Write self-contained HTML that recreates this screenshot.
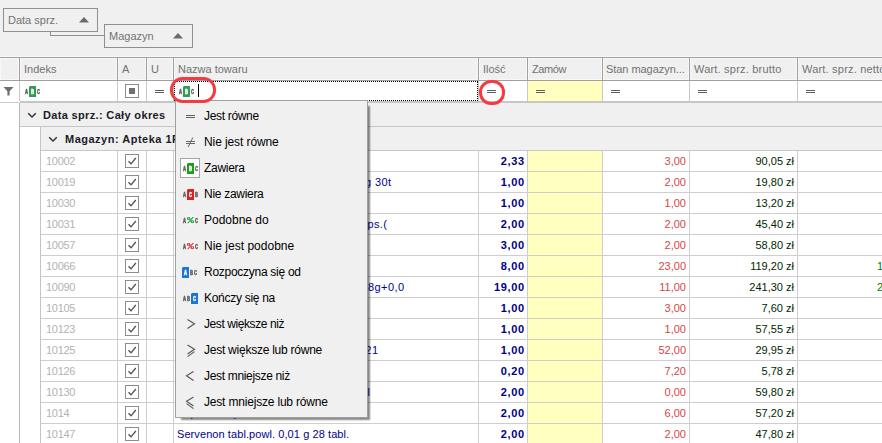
<!DOCTYPE html>
<html lang="pl"><head><meta charset="utf-8"><title>Filtr</title>
<style>
*{box-sizing:border-box;margin:0;padding:0}
html,body{width:882px;height:443px;overflow:hidden;background:#fff}
body{position:relative;font-family:"Liberation Sans","DejaVu Sans",sans-serif;font-size:11px;color:#000}
.a{position:absolute}
.t{position:absolute;white-space:nowrap;line-height:13px;height:13px}
.hd{color:#727272}
.gb{position:absolute;border:1px solid #8f8f8f;background:#f0f0f0}
.vl{position:absolute;width:1px;background:#cecece}
.hl{position:absolute;height:1px;background:#cecece}
.cb{position:absolute;width:14px;height:14px;border:1px solid #8c8c8c;background:#fff}
.eq{position:absolute;width:9px;height:3px;border-top:1px solid #5c5c68;border-bottom:1px solid #5c5c68}
.mi{position:absolute;left:204px;white-space:nowrap;font-size:12px;line-height:16px;height:16px;color:#000}
svg{position:absolute;overflow:visible}
.ic{will-change:opacity;opacity:.99}
svg text{font-family:"Liberation Mono",monospace;font-weight:bold;font-size:7.6px;stroke-width:0.5px}
</style></head>
<body>
<div class="a" style="left:0;top:0;width:882px;height:57px;background:#f0f0f0"></div>
<div class="a" style="left:50px;top:31px;width:55px;height:5px;border-left:1px solid #8f8f8f;border-bottom:1px solid #8f8f8f"></div>
<div class="gb" style="left:3px;top:8px;width:95px;height:24px"></div>
<div class="t hd" style="left:8px;top:14px">Data sprz.</div>
<svg style="left:78px;top:16px" width="12" height="7" viewBox="0 0 12 7"><polygon points="1,6.5 6,1 11,6.5" fill="#6a6a6a"/></svg>
<div class="gb" style="left:104px;top:24px;width:89px;height:24px"></div>
<div class="t hd" style="left:109px;top:30px">Magazyn</div>
<svg style="left:172px;top:32px" width="12" height="7" viewBox="0 0 12 7"><polygon points="1,6.5 6,1 11,6.5" fill="#6a6a6a"/></svg>
<div class="a" style="left:0;top:56px;width:882px;height:1px;background:#f8f8f8"></div>
<div class="a" style="left:0;top:57px;width:882px;height:24px;background:#f0f0f0;border-top:1px solid #a0a0a0;border-bottom:1px solid #a0a0a0"></div>
<div class="a" style="left:19px;top:58px;width:1px;height:22px;background:#a0a0a0"></div>
<div class="a" style="left:117px;top:58px;width:1px;height:22px;background:#a0a0a0"></div>
<div class="a" style="left:146px;top:58px;width:1px;height:22px;background:#a0a0a0"></div>
<div class="a" style="left:173px;top:58px;width:1px;height:22px;background:#a0a0a0"></div>
<div class="a" style="left:478px;top:58px;width:1px;height:22px;background:#a0a0a0"></div>
<div class="a" style="left:527px;top:58px;width:1px;height:22px;background:#a0a0a0"></div>
<div class="a" style="left:602px;top:58px;width:1px;height:22px;background:#a0a0a0"></div>
<div class="a" style="left:689px;top:58px;width:1px;height:22px;background:#a0a0a0"></div>
<div class="a" style="left:797px;top:58px;width:1px;height:22px;background:#a0a0a0"></div>
<div class="a" style="left:0px;top:58px;width:19px;height:22px;border:1px solid #f8f8f8"></div>
<div class="a" style="left:20px;top:58px;width:97px;height:22px;border:1px solid #f8f8f8"></div>
<div class="a" style="left:118px;top:58px;width:28px;height:22px;border:1px solid #f8f8f8"></div>
<div class="a" style="left:147px;top:58px;width:26px;height:22px;border:1px solid #f8f8f8"></div>
<div class="a" style="left:174px;top:58px;width:304px;height:22px;border:1px solid #f8f8f8"></div>
<div class="a" style="left:479px;top:58px;width:48px;height:22px;border:1px solid #f8f8f8"></div>
<div class="a" style="left:528px;top:58px;width:74px;height:22px;border:1px solid #f8f8f8"></div>
<div class="a" style="left:603px;top:58px;width:86px;height:22px;border:1px solid #f8f8f8"></div>
<div class="a" style="left:690px;top:58px;width:107px;height:22px;border:1px solid #f8f8f8"></div>
<div class="a" style="left:798px;top:58px;width:92px;height:22px;border:1px solid #f8f8f8"></div>
<div class="t hd" style="left:24px;top:63px">Indeks</div>
<div class="t hd" style="left:122px;top:63px">A</div>
<div class="t hd" style="left:151px;top:63px">U</div>
<div class="t hd" style="left:178px;top:63px">Nazwa towaru</div>
<div class="t hd" style="left:483px;top:63px">Ilość</div>
<div class="t hd" style="left:532px;top:63px;letter-spacing:-0.4px">Zamów</div>
<div class="t hd" style="left:606px;top:63px;letter-spacing:-0.05px">Stan magazyn...</div>
<div class="t hd" style="left:694px;top:63px;letter-spacing:0.2px">Wart. sprz. brutto</div>
<div class="t hd" style="left:802px;top:63px;letter-spacing:0.2px">Wart. sprz. netto</div>
<div class="a" style="left:528px;top:81px;width:74px;height:20px;background:#ffffc0"></div>
<div class="a" style="left:19px;top:81px;width:1px;height:20px;background:#c8c8c8"></div>
<div class="a" style="left:117px;top:81px;width:1px;height:20px;background:#c8c8c8"></div>
<div class="a" style="left:146px;top:81px;width:1px;height:20px;background:#c8c8c8"></div>
<div class="a" style="left:173px;top:81px;width:1px;height:20px;background:#c8c8c8"></div>
<div class="a" style="left:478px;top:81px;width:1px;height:20px;background:#c8c8c8"></div>
<div class="a" style="left:527px;top:81px;width:1px;height:20px;background:#c8c8c8"></div>
<div class="a" style="left:602px;top:81px;width:1px;height:20px;background:#c8c8c8"></div>
<div class="a" style="left:689px;top:81px;width:1px;height:20px;background:#c8c8c8"></div>
<div class="a" style="left:797px;top:81px;width:1px;height:20px;background:#c8c8c8"></div>
<div class="a" style="left:20px;top:101px;width:862px;height:2px;background:#c6c6c6"></div>
<div class="a" style="left:0;top:102px;width:19px;height:1px;background:#cacaca"></div>
<svg style="left:3px;top:86px" width="12" height="11" viewBox="0 0 12 11"><path d="M0.5,1 H10.5 L6.6,5.2 V9.6 H4.4 V5.2 Z" fill="#6e6e6e"/></svg>
<div class="cb" style="left:125px;top:84px"></div><div class="a" style="left:129px;top:88px;width:6px;height:6px;background:#707070"></div>
<div class="eq" style="left:155px;top:90px"></div>
<div class="eq" style="left:487px;top:90px"></div>
<div class="eq" style="left:536px;top:90px"></div>
<div class="eq" style="left:611px;top:90px"></div>
<div class="eq" style="left:698px;top:90px"></div>
<div class="eq" style="left:806px;top:90px"></div>
<div class="a" style="left:174px;top:81px;width:304px;height:20px;border:1px dotted #000"></div>
<div class="a" style="left:198px;top:84px;width:1px;height:13px;background:#000"></div>
<div class="a" style="left:20px;top:103px;width:862px;height:23px;background:#f0f0f0"></div>
<div class="hl" style="left:20px;top:126px;width:862px;background:#c6c6c6"></div>
<div class="a" style="left:41px;top:127px;width:841px;height:23px;background:#f0f0f0"></div>
<div class="hl" style="left:41px;top:150px;width:841px;background:#c6c6c6"></div>
<svg style="left:27px;top:111.5px" width="10" height="7" viewBox="0 0 10 7"><path d="M1.2,1.2 L5,5 L8.8,1.2" fill="none" stroke="#303030" stroke-width="1.4"/></svg>
<div class="t" style="left:43px;top:109px;font-weight:bold;letter-spacing:0.34px;color:#1c1c28">Data sprz.: Cały okres</div>
<svg style="left:48px;top:135.5px" width="10" height="7" viewBox="0 0 10 7"><path d="M1.2,1.2 L5,5 L8.8,1.2" fill="none" stroke="#303030" stroke-width="1.4"/></svg>
<div class="t" style="left:65px;top:133px;font-weight:bold;letter-spacing:0.5px;color:#1c1c28">Magazyn: Apteka 1F</div>
<div class="a" style="left:19px;top:103px;width:1px;height:340px;background:#b8b8b8"></div>
<div class="vl" style="left:40px;top:127px;height:316px;background:#c4c4c4"></div>
<div class="a" style="left:528px;top:151px;width:74px;height:292px;background:#ffffc0"></div>
<div class="vl" style="left:117px;top:151px;height:292px"></div>
<div class="vl" style="left:146px;top:151px;height:292px"></div>
<div class="vl" style="left:173px;top:151px;height:292px"></div>
<div class="vl" style="left:478px;top:151px;height:292px"></div>
<div class="vl" style="left:527px;top:151px;height:292px"></div>
<div class="vl" style="left:602px;top:151px;height:292px"></div>
<div class="vl" style="left:689px;top:151px;height:292px"></div>
<div class="vl" style="left:797px;top:151px;height:292px"></div>
<div class="hl" style="left:41px;top:171px;width:841px"></div>
<div class="t" style="left:46px;top:155px;color:#b2b2b6;letter-spacing:-0.3px">10002</div>
<div class="cb" style="left:125px;top:154px"><svg style="left:0;top:0" width="12" height="12" viewBox="0 0 12 12"><path d="M2.5,6.2 L5,8.8 L9.8,3" fill="none" stroke="#505050" stroke-width="1.3"/></svg></div>
<div class="t" style="right:357.4px;top:155px;color:#000080;font-weight:bold;letter-spacing:0.6px">2,33</div>
<div class="t" style="right:196px;top:155px;color:#d04848">3,00</div>
<div class="t" style="right:88px;top:155px;color:#002800">90,05 zł</div>
<div class="hl" style="left:41px;top:192px;width:841px"></div>
<div class="t" style="left:46px;top:176px;color:#b2b2b6;letter-spacing:-0.3px">10019</div>
<div class="cb" style="left:125px;top:175px"><svg style="left:0;top:0" width="12" height="12" viewBox="0 0 12 12"><path d="M2.5,6.2 L5,8.8 L9.8,3" fill="none" stroke="#505050" stroke-width="1.3"/></svg></div>
<div class="t" style="right:490.6px;top:176px;color:#000090;letter-spacing:0.4px">Polopiryna S tabl. 0,3 g 30t</div>
<div class="t" style="right:357.4px;top:176px;color:#000080;font-weight:bold;letter-spacing:0.6px">1,00</div>
<div class="t" style="right:196px;top:176px;color:#d04848">2,00</div>
<div class="t" style="right:88px;top:176px;color:#002800">19,80 zł</div>
<div class="hl" style="left:41px;top:213px;width:841px"></div>
<div class="t" style="left:46px;top:197px;color:#b2b2b6;letter-spacing:-0.3px">10030</div>
<div class="cb" style="left:125px;top:196px"><svg style="left:0;top:0" width="12" height="12" viewBox="0 0 12 12"><path d="M2.5,6.2 L5,8.8 L9.8,3" fill="none" stroke="#505050" stroke-width="1.3"/></svg></div>
<div class="t" style="right:357.4px;top:197px;color:#000080;font-weight:bold;letter-spacing:0.6px">1,00</div>
<div class="t" style="right:196px;top:197px;color:#d04848">1,00</div>
<div class="t" style="right:88px;top:197px;color:#002800">13,20 zł</div>
<div class="hl" style="left:41px;top:234px;width:841px"></div>
<div class="t" style="left:46px;top:218px;color:#b2b2b6;letter-spacing:-0.3px">10031</div>
<div class="cb" style="left:125px;top:217px"><svg style="left:0;top:0" width="12" height="12" viewBox="0 0 12 12"><path d="M2.5,6.2 L5,8.8 L9.8,3" fill="none" stroke="#505050" stroke-width="1.3"/></svg></div>
<div class="t" style="right:494.6px;top:218px;color:#000090;letter-spacing:0.4px">Aspirin C tabl.mus. 10 szt. kaps.(</div>
<div class="t" style="right:357.4px;top:218px;color:#000080;font-weight:bold;letter-spacing:0.6px">2,00</div>
<div class="t" style="right:196px;top:218px;color:#d04848">2,00</div>
<div class="t" style="right:88px;top:218px;color:#002800">45,40 zł</div>
<div class="hl" style="left:41px;top:255px;width:841px"></div>
<div class="t" style="left:46px;top:239px;color:#b2b2b6;letter-spacing:-0.3px">10057</div>
<div class="cb" style="left:125px;top:238px"><svg style="left:0;top:0" width="12" height="12" viewBox="0 0 12 12"><path d="M2.5,6.2 L5,8.8 L9.8,3" fill="none" stroke="#505050" stroke-width="1.3"/></svg></div>
<div class="t" style="right:357.4px;top:239px;color:#000080;font-weight:bold;letter-spacing:0.6px">3,00</div>
<div class="t" style="right:196px;top:239px;color:#d04848">2,00</div>
<div class="t" style="right:88px;top:239px;color:#002800">58,80 zł</div>
<div class="hl" style="left:41px;top:276px;width:841px"></div>
<div class="t" style="left:46px;top:260px;color:#b2b2b6;letter-spacing:-0.3px">10066</div>
<div class="cb" style="left:125px;top:259px"><svg style="left:0;top:0" width="12" height="12" viewBox="0 0 12 12"><path d="M2.5,6.2 L5,8.8 L9.8,3" fill="none" stroke="#505050" stroke-width="1.3"/></svg></div>
<div class="t" style="right:357.4px;top:260px;color:#000080;font-weight:bold;letter-spacing:0.6px">8,00</div>
<div class="t" style="right:196px;top:260px;color:#d04848">23,00</div>
<div class="t" style="right:88px;top:260px;color:#002800">119,20 zł</div>
<div class="t" style="left:877px;top:260px;color:#008000">110,37 zł</div>
<div class="hl" style="left:41px;top:297px;width:841px"></div>
<div class="t" style="left:46px;top:281px;color:#b2b2b6;letter-spacing:-0.3px">10090</div>
<div class="cb" style="left:125px;top:280px"><svg style="left:0;top:0" width="12" height="12" viewBox="0 0 12 12"><path d="M2.5,6.2 L5,8.8 L9.8,3" fill="none" stroke="#505050" stroke-width="1.3"/></svg></div>
<div class="t" style="right:477.6px;top:281px;color:#000090;letter-spacing:0.4px">Gripex tabl. 0,325g+0,03g+0,008g+0,0</div>
<div class="t" style="right:357.4px;top:281px;color:#000080;font-weight:bold;letter-spacing:0.6px">19,00</div>
<div class="t" style="right:196px;top:281px;color:#d04848">11,00</div>
<div class="t" style="right:88px;top:281px;color:#002800">241,30 zł</div>
<div class="t" style="left:877px;top:281px;color:#008000">223,43 zł</div>
<div class="hl" style="left:41px;top:318px;width:841px"></div>
<div class="t" style="left:46px;top:302px;color:#b2b2b6;letter-spacing:-0.3px">10105</div>
<div class="cb" style="left:125px;top:301px"><svg style="left:0;top:0" width="12" height="12" viewBox="0 0 12 12"><path d="M2.5,6.2 L5,8.8 L9.8,3" fill="none" stroke="#505050" stroke-width="1.3"/></svg></div>
<div class="t" style="right:357.4px;top:302px;color:#000080;font-weight:bold;letter-spacing:0.6px">1,00</div>
<div class="t" style="right:196px;top:302px;color:#d04848">3,00</div>
<div class="t" style="right:88px;top:302px;color:#002800">7,60 zł</div>
<div class="hl" style="left:41px;top:339px;width:841px"></div>
<div class="t" style="left:46px;top:323px;color:#b2b2b6;letter-spacing:-0.3px">10123</div>
<div class="cb" style="left:125px;top:322px"><svg style="left:0;top:0" width="12" height="12" viewBox="0 0 12 12"><path d="M2.5,6.2 L5,8.8 L9.8,3" fill="none" stroke="#505050" stroke-width="1.3"/></svg></div>
<div class="t" style="right:357.4px;top:323px;color:#000080;font-weight:bold;letter-spacing:0.6px">1,00</div>
<div class="t" style="right:196px;top:323px;color:#d04848">1,00</div>
<div class="t" style="right:88px;top:323px;color:#002800">57,55 zł</div>
<div class="hl" style="left:41px;top:360px;width:841px"></div>
<div class="t" style="left:46px;top:344px;color:#b2b2b6;letter-spacing:-0.3px">10125</div>
<div class="cb" style="left:125px;top:343px"><svg style="left:0;top:0" width="12" height="12" viewBox="0 0 12 12"><path d="M2.5,6.2 L5,8.8 L9.8,3" fill="none" stroke="#505050" stroke-width="1.3"/></svg></div>
<div class="t" style="right:503.6px;top:344px;color:#000090;letter-spacing:0.4px">Rutinoscorbin tabl. 150 szt. 21</div>
<div class="t" style="right:357.4px;top:344px;color:#000080;font-weight:bold;letter-spacing:0.6px">1,00</div>
<div class="t" style="right:196px;top:344px;color:#d04848">52,00</div>
<div class="t" style="right:88px;top:344px;color:#002800">29,95 zł</div>
<div class="hl" style="left:41px;top:381px;width:841px"></div>
<div class="t" style="left:46px;top:365px;color:#b2b2b6;letter-spacing:-0.3px">10126</div>
<div class="cb" style="left:125px;top:364px"><svg style="left:0;top:0" width="12" height="12" viewBox="0 0 12 12"><path d="M2.5,6.2 L5,8.8 L9.8,3" fill="none" stroke="#505050" stroke-width="1.3"/></svg></div>
<div class="t" style="right:357.4px;top:365px;color:#000080;font-weight:bold;letter-spacing:0.6px">0,20</div>
<div class="t" style="right:196px;top:365px;color:#d04848">7,20</div>
<div class="t" style="right:88px;top:365px;color:#002800">5,78 zł</div>
<div class="hl" style="left:41px;top:402px;width:841px"></div>
<div class="t" style="left:46px;top:386px;color:#b2b2b6;letter-spacing:-0.3px">10130</div>
<div class="cb" style="left:125px;top:385px"><svg style="left:0;top:0" width="12" height="12" viewBox="0 0 12 12"><path d="M2.5,6.2 L5,8.8 L9.8,3" fill="none" stroke="#505050" stroke-width="1.3"/></svg></div>
<div class="t" style="right:511.6px;top:386px;color:#000090;letter-spacing:0.4px">Ibuprom tabl.powl. 0,2 g 10 tabl</div>
<div class="t" style="right:357.4px;top:386px;color:#000080;font-weight:bold;letter-spacing:0.6px">2,00</div>
<div class="t" style="right:196px;top:386px;color:#d04848">0,00</div>
<div class="t" style="right:88px;top:386px;color:#002800">59,80 zł</div>
<div class="hl" style="left:41px;top:423px;width:841px"></div>
<div class="t" style="left:46px;top:407px;color:#b2b2b6;letter-spacing:-0.3px">1014</div>
<div class="cb" style="left:125px;top:406px"><svg style="left:0;top:0" width="12" height="12" viewBox="0 0 12 12"><path d="M2.5,6.2 L5,8.8 L9.8,3" fill="none" stroke="#505050" stroke-width="1.3"/></svg></div>
<div class="t" style="left:177px;top:407px;color:#000090;letter-spacing:0.08px">Eupatol 10 proc. krem 30</div>
<div class="t" style="right:357.4px;top:407px;color:#000080;font-weight:bold;letter-spacing:0.6px">2,00</div>
<div class="t" style="right:196px;top:407px;color:#d04848">6,00</div>
<div class="t" style="right:88px;top:407px;color:#002800">57,20 zł</div>
<div class="hl" style="left:41px;top:444px;width:841px"></div>
<div class="t" style="left:46px;top:428px;color:#b2b2b6;letter-spacing:-0.3px">10147</div>
<div class="cb" style="left:125px;top:427px"><svg style="left:0;top:0" width="12" height="12" viewBox="0 0 12 12"><path d="M2.5,6.2 L5,8.8 L9.8,3" fill="none" stroke="#505050" stroke-width="1.3"/></svg></div>
<div class="t" style="left:177px;top:428px;color:#000090;letter-spacing:0.08px">Servenon tabl.powl. 0,01 g 28 tabl.</div>
<div class="t" style="right:357.4px;top:428px;color:#000080;font-weight:bold;letter-spacing:0.6px">2,00</div>
<div class="t" style="right:196px;top:428px;color:#d04848">2,00</div>
<div class="t" style="right:88px;top:428px;color:#002800">47,80 zł</div>
<div class="a" style="left:175px;top:100px;width:193px;height:318px;background:#f0f0f0;border:1px solid #a0a0a0;box-shadow:4px 4px 1.5px -2px rgba(0,0,0,0.46)"></div>
<div class="mi" style="top:108px;letter-spacing:-0.323px">Jest równe</div>
<div class="mi" style="top:134px;letter-spacing:-0.095px">Nie jest równe</div>
<div class="mi" style="top:160px;letter-spacing:-0.284px">Zawiera</div>
<div class="mi" style="top:186px;letter-spacing:-0.291px">Nie zawiera</div>
<div class="mi" style="top:212px;letter-spacing:-0.013px">Podobne do</div>
<div class="mi" style="top:238px;letter-spacing:0.008px">Nie jest podobne</div>
<div class="mi" style="top:264px;letter-spacing:-0.276px">Rozpoczyna się od</div>
<div class="mi" style="top:290px;letter-spacing:-0.286px">Kończy się na</div>
<div class="mi" style="top:316px;letter-spacing:-0.419px">Jest większe niż</div>
<div class="mi" style="top:342px;letter-spacing:-0.245px">Jest większe lub równe</div>
<div class="mi" style="top:368px;letter-spacing:-0.322px">Jest mniejsze niż</div>
<div class="mi" style="top:394px;letter-spacing:-0.187px">Jest mniejsze lub równe</div>
<div class="eq" style="left:186px;top:115px;border-color:#606060"></div>
<svg style="left:185px;top:136px" width="11" height="12" viewBox="0 0 11 12"><path d="M1,5.5 H10 M1,7.5 H10 M3.2,11 L7.8,1.5" fill="none" stroke="#666" stroke-width="1"/></svg>
<div class="a" style="left:180px;top:158px;width:20px;height:20px;background:#fff;border:1px solid #a6a6a6"></div>
<svg style="left:186px;top:318px" width="10" height="12" viewBox="0 0 10 12"><path d="M1.5,1.5 L8.5,5.7 L1.5,10.5" fill="none" stroke="#585858" stroke-width="1.15"/></svg>
<svg style="left:186px;top:344px" width="10" height="14" viewBox="0 0 10 14"><path d="M1.5,1 L8.5,5.2 L1.5,10 M8.5,7.6 L1.5,12.6" fill="none" stroke="#585858" stroke-width="1.15"/></svg>
<svg style="left:185px;top:370px" width="10" height="12" viewBox="0 0 10 12"><path d="M8.5,1.5 L1.5,5.7 L8.5,10.5" fill="none" stroke="#585858" stroke-width="1.15"/></svg>
<svg style="left:185px;top:396px" width="10" height="14" viewBox="0 0 10 14"><path d="M8.5,1 L1.5,5.2 L8.5,10 M1.5,7.6 L8.5,12.6" fill="none" stroke="#585858" stroke-width="1.15"/></svg>
<div class="a" style="left:170px;top:77px;width:46px;height:26px;border:3px solid #f53a43;border-radius:12.5px"></div>
<div class="a" style="left:478.8px;top:79.8px;width:26px;height:25.2px;border:3px solid #f53a43;border-radius:12px"></div>
<svg style="left:25px;top:86px" class="ic" width="16" height="11" viewBox="0 0 16 11"><path d="M5,0 H11 V11 H4 V1 Z" fill="#339a50"/><text x="0" y="8" textLength="3" lengthAdjust="spacingAndGlyphs" fill="#5e5e5e" stroke="#5e5e5e">A</text><text x="6" y="8" textLength="3" lengthAdjust="spacingAndGlyphs" fill="#fff" stroke="#fff">B</text><text x="12" y="8" textLength="3" lengthAdjust="spacingAndGlyphs" fill="#5e5e5e" stroke="#5e5e5e">C</text></svg>
<svg style="left:179px;top:86px" class="ic" width="16" height="11" viewBox="0 0 16 11"><path d="M5,0 H11 V11 H4 V1 Z" fill="#339a50"/><text x="0" y="8" textLength="3" lengthAdjust="spacingAndGlyphs" fill="#5e5e5e" stroke="#5e5e5e">A</text><text x="6" y="8" textLength="3" lengthAdjust="spacingAndGlyphs" fill="#fff" stroke="#fff">B</text><text x="12" y="8" textLength="3" lengthAdjust="spacingAndGlyphs" fill="#5e5e5e" stroke="#5e5e5e">C</text></svg>
<svg style="left:183px;top:163px" class="ic" width="16" height="11" viewBox="0 0 16 11"><path d="M5,0 H11 V11 H4 V1 Z" fill="#14a014"/><text x="0" y="8" textLength="3" lengthAdjust="spacingAndGlyphs" fill="#5e5e5e" stroke="#5e5e5e">A</text><text x="6" y="8" textLength="3" lengthAdjust="spacingAndGlyphs" fill="#fff" stroke="#fff">B</text><text x="12" y="8" textLength="3" lengthAdjust="spacingAndGlyphs" fill="#5e5e5e" stroke="#5e5e5e">C</text></svg>
<svg style="left:183px;top:189px" class="ic" width="16" height="11" viewBox="0 0 16 11"><path d="M5,0 H11 V11 H4 V1 Z" fill="#d42222"/><text x="0" y="8" textLength="3" lengthAdjust="spacingAndGlyphs" fill="#5e5e5e" stroke="#5e5e5e">A</text><text x="6" y="8" textLength="3" lengthAdjust="spacingAndGlyphs" fill="#fff" stroke="#fff">C</text><text x="12" y="8" textLength="3" lengthAdjust="spacingAndGlyphs" fill="#5e5e5e" stroke="#5e5e5e">B</text></svg>
<svg style="left:183px;top:215px" class="ic" width="16" height="11" viewBox="0 0 16 11"><rect x="3.5" y="0.5" width="8" height="9" fill="#fff" opacity="0.8"/><text x="0" y="8" textLength="3" lengthAdjust="spacingAndGlyphs" fill="#5e5e5e" stroke="#5e5e5e">A</text><text x="4" y="8.4" textLength="7" lengthAdjust="spacingAndGlyphs" fill="#18a030" stroke="#18a030" style="font-size:9.2px;stroke-width:0.25px">%</text><text x="12" y="8" textLength="3" lengthAdjust="spacingAndGlyphs" fill="#5e5e5e" stroke="#5e5e5e">C</text></svg>
<svg style="left:183px;top:241px" class="ic" width="16" height="11" viewBox="0 0 16 11"><rect x="3.5" y="0.5" width="8" height="9" fill="#fff" opacity="0.8"/><text x="0" y="8" textLength="3" lengthAdjust="spacingAndGlyphs" fill="#5e5e5e" stroke="#5e5e5e">A</text><text x="4" y="8.4" textLength="7" lengthAdjust="spacingAndGlyphs" fill="#e02832" stroke="#e02832" style="font-size:9.2px;stroke-width:0.25px">%</text><text x="12" y="8" textLength="3" lengthAdjust="spacingAndGlyphs" fill="#5e5e5e" stroke="#5e5e5e">C</text></svg>
<svg style="left:183px;top:267px" class="ic" width="16" height="11" viewBox="0 0 16 11"><path d="M0,0 H6 V11 H-1 V1 Z" fill="#1874d6"/><text x="1" y="8" textLength="3" lengthAdjust="spacingAndGlyphs" fill="#fff" stroke="#fff">A</text><text x="7" y="8" textLength="3" lengthAdjust="spacingAndGlyphs" fill="#5e5e5e" stroke="#5e5e5e">B</text><text x="11" y="8" textLength="3" lengthAdjust="spacingAndGlyphs" fill="#5e5e5e" stroke="#5e5e5e">C</text></svg>
<svg style="left:183px;top:293px" class="ic" width="16" height="11" viewBox="0 0 16 11"><path d="M9,0 H15 V11 H8 V1 Z" fill="#1874d6"/><text x="0" y="8" textLength="3" lengthAdjust="spacingAndGlyphs" fill="#5e5e5e" stroke="#5e5e5e">A</text><text x="4" y="8" textLength="3" lengthAdjust="spacingAndGlyphs" fill="#5e5e5e" stroke="#5e5e5e">B</text><text x="10" y="8" textLength="3" lengthAdjust="spacingAndGlyphs" fill="#fff" stroke="#fff">C</text></svg>
</body></html>
